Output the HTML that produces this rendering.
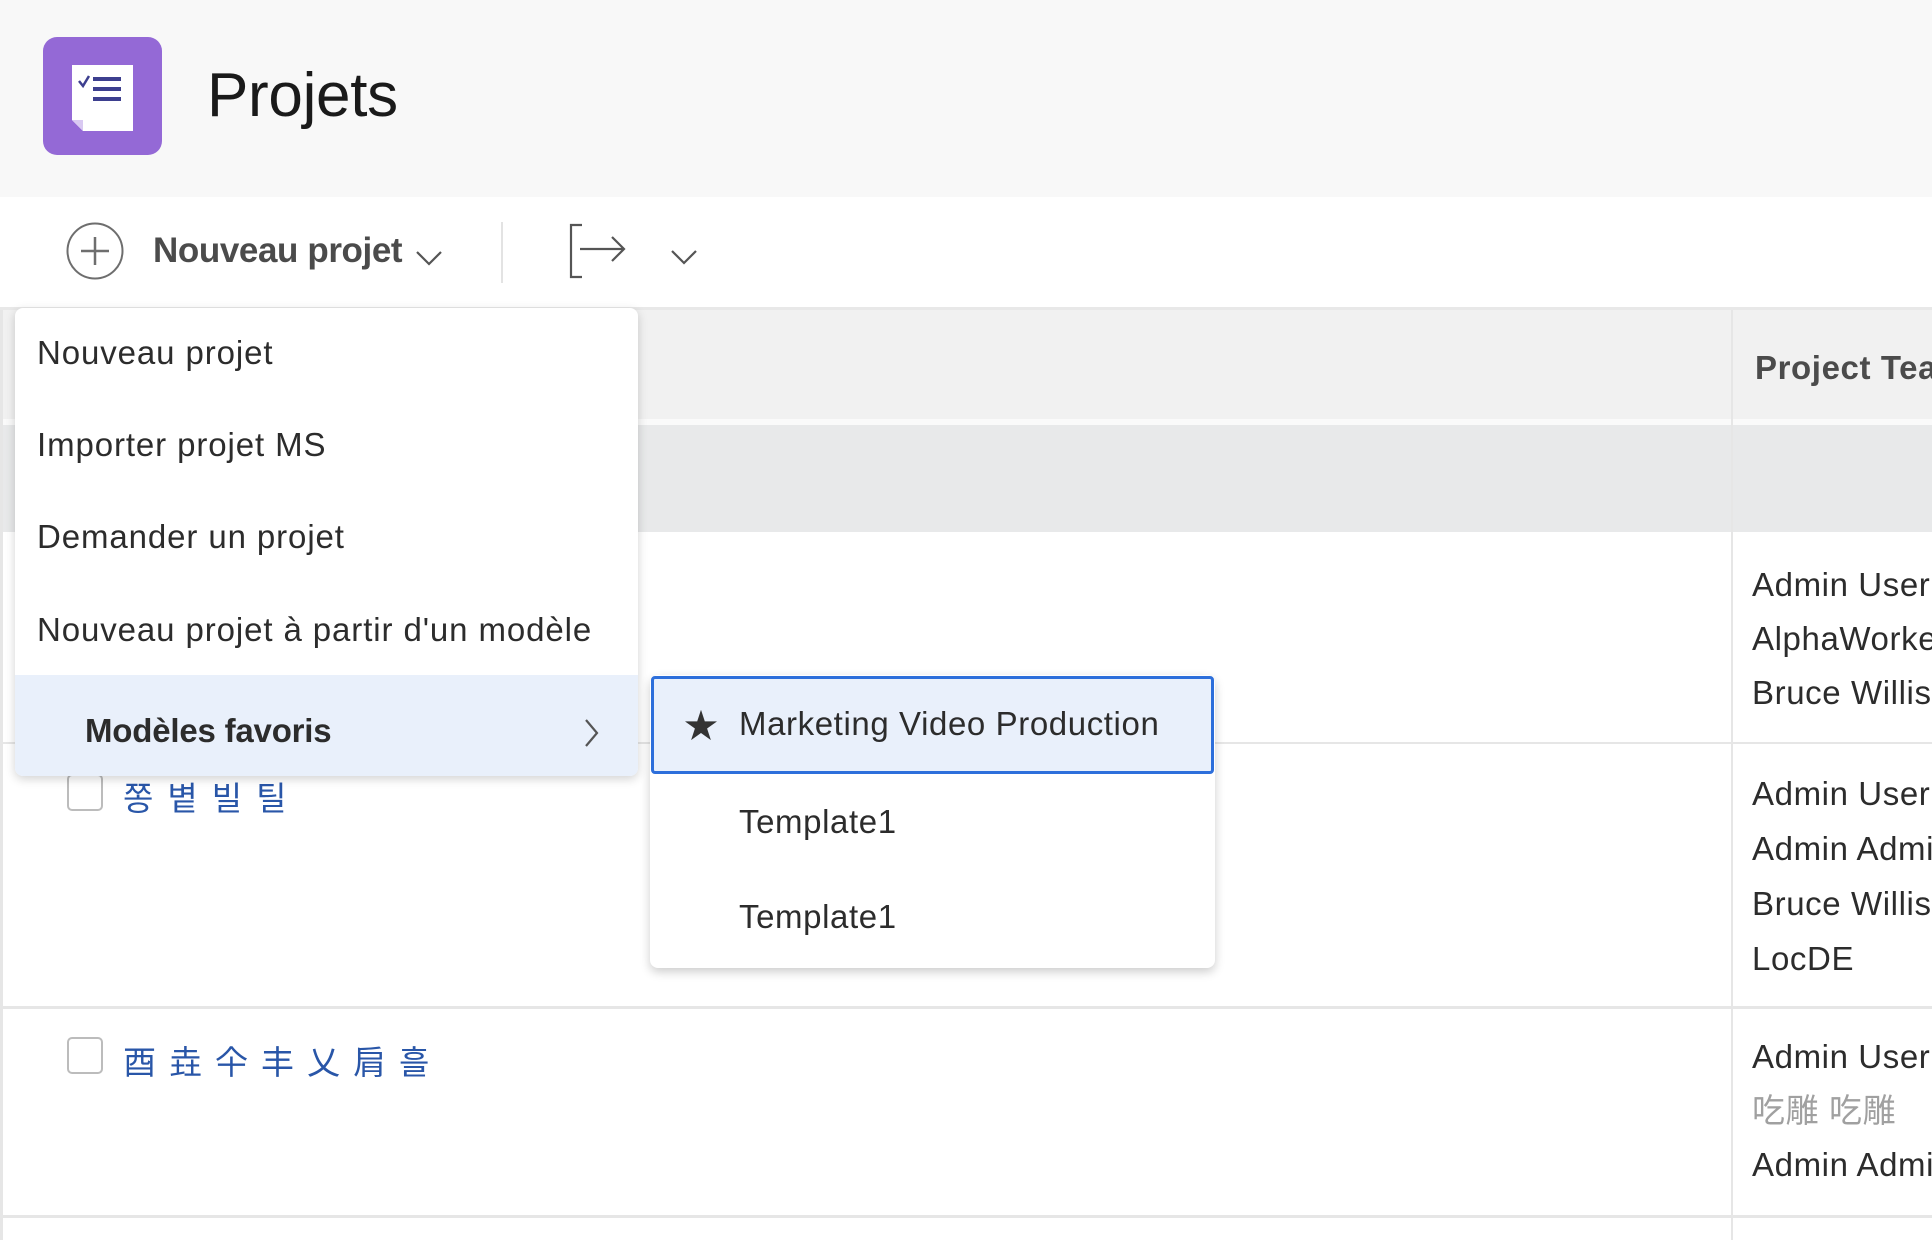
<!DOCTYPE html>
<html><head><meta charset="utf-8"><style>
*{margin:0;padding:0;box-sizing:border-box}
body{width:1932px;height:1236px;overflow:hidden;background:#fff;font-family:"Liberation Sans","Noto Sans CJK KR",sans-serif;color:#2c2c2c;position:relative}
.a{position:absolute;white-space:nowrap}
.t{font-size:33px;letter-spacing:0.6px}
</style></head><body>
<div class="a" style="left:0;top:0;width:1932px;height:197px;background:#f8f8f8"></div>
<div class="a" style="left:43px;top:37px;width:119px;height:118px;border-radius:14px;background:#9469d6"></div>
<svg class="a" style="left:43px;top:37px" width="119" height="118" viewBox="0 0 119 118">
<path d="M29 28H90V94H40L29 83Z" fill="#fff"/>
<path d="M29 83L40 83L40 94Z" fill="#d9c9f2"/>
<path d="M36 44l4 5l6 -10" stroke="#3d3f8f" stroke-width="2.5" fill="none"/>
<rect x="50" y="40" width="28" height="4" fill="#3d3f8f"/><rect x="50" y="50" width="28" height="4" fill="#3d3f8f"/><rect x="50" y="60" width="28" height="4" fill="#3d3f8f"/>
</svg>
<div class="a" style="left:207px;top:60px;font-size:62px;color:#1a1a1a;letter-spacing:-0.3px">Projets</div>
<svg class="a" style="left:65px;top:221px" width="60" height="60"><circle cx="30" cy="30" r="27.5" fill="none" stroke="#6e6e6e" stroke-width="2"/><path d="M30 16V44M16 30H44" stroke="#6e6e6e" stroke-width="2.5"/></svg>
<div class="a" style="left:153px;top:231px;font-size:35px;font-weight:bold;color:#4b4b4b;letter-spacing:-0.4px">Nouveau projet</div>
<svg class="a" style="left:414px;top:247px" width="30" height="20"><path d="M3 5l12 12l12-12" stroke="#555" stroke-width="2.2" fill="none"/></svg>
<div class="a" style="left:501px;top:222px;width:2px;height:61px;background:#e3e3e3"></div>
<svg class="a" style="left:568px;top:222px" width="62" height="58"><path d="M14 3H3V55H14" stroke="#555" stroke-width="2.2" fill="none"/><path d="M12 27H56M44 15l12 12l-12 12" stroke="#555" stroke-width="2.2" fill="none"/></svg>
<svg class="a" style="left:669px;top:247px" width="30" height="20"><path d="M3 4l12 12l12-12" stroke="#555" stroke-width="2.2" fill="none"/></svg>
<div class="a" style="left:0;top:307px;width:1932px;height:3px;background:#e8e8e8"></div>
<div class="a" style="left:0;top:310px;width:1932px;height:109px;background:#f1f1f1"></div>
<div class="a" style="left:0;top:419px;width:1932px;height:6px;background:#fafafa"></div>
<div class="a" style="left:0;top:425px;width:1932px;height:107px;background:#e8e9ea"></div>
<div class="a" style="left:1731px;top:310px;width:2px;height:930px;background:#e6e6e6"></div>
<div class="a" style="left:0;top:310px;width:3px;height:930px;background:#e6e6e6"></div>
<div class="a t" style="left:1755px;top:349px;font-weight:bold;color:#4b4b4b">Project Team</div>
<div class="a" style="left:0;top:742px;width:1932px;height:2px;background:#e6e6e6"></div>
<div class="a" style="left:0;top:1006px;width:1932px;height:3px;background:#e6e6e6"></div>
<div class="a" style="left:0;top:1215px;width:1932px;height:3px;background:#e6e6e6"></div>
<div class="a t" style="left:1752px;top:558px;line-height:54px">Admin User<br>AlphaWorker<br>Bruce Willis</div>
<div class="a t" style="left:1752px;top:766px;line-height:55px">Admin User<br>Admin Admin<br>Bruce Willis<br>LocDE</div>
<div class="a t" style="left:1752px;top:1030px;line-height:54px">Admin User<br><span style="color:#a0a0a0">吃雕 吃雕</span><br>Admin Admin</div>
<div class="a" style="left:67px;top:774px;width:36px;height:37px;border:2.5px solid #bcbcbc;border-radius:5px"></div>
<div class="a" style="left:123px;top:772px;font-size:33px;color:#2956a8;letter-spacing:14px">쫑볕빌틸</div>
<div class="a" style="left:67px;top:1037px;width:36px;height:37px;border:2.5px solid #bcbcbc;border-radius:5px"></div>
<div class="a" style="left:123px;top:1036px;font-size:33px;color:#2956a8;letter-spacing:13px">酉垚仐丰乂肩흘</div>
<div class="a" style="left:15px;top:308px;width:623px;height:468px;background:#fff;border-radius:8px;box-shadow:0 3px 10px rgba(0,0,0,.18);overflow:hidden">
<div class="a t" style="left:22px;top:26px;letter-spacing:0.9px">Nouveau projet</div>
<div class="a t" style="left:22px;top:118px;letter-spacing:0.9px">Importer projet MS</div>
<div class="a t" style="left:22px;top:210px;letter-spacing:0.9px">Demander un projet</div>
<div class="a t" style="left:22px;top:303px;letter-spacing:0.9px">Nouveau projet à partir d'un modèle</div>
<div class="a" style="left:0;top:367px;width:623px;height:101px;background:#e9f0fb"></div>
<div class="a t" style="left:70px;top:404px;font-weight:bold;letter-spacing:-0.2px">Modèles favoris</div>
<svg class="a" style="left:566px;top:408px" width="20" height="34"><path d="M5 4l11 13l-11 13" stroke="#555" stroke-width="2.2" fill="none"/></svg>
</div>
<div class="a" style="left:650px;top:675px;width:565px;height:293px;background:#fff;border-radius:8px;box-shadow:0 4px 10px rgba(0,0,0,.2)"></div>
<div class="a" style="left:651px;top:676px;width:563px;height:98px;background:#e9f0fb;border:3px solid #2d6fdb;border-radius:4px"></div>
<div class="a" style="left:684px;top:699px;font-size:34px;color:#333">★</div>
<div class="a t" style="left:739px;top:705px">Marketing Video Production</div>
<div class="a t" style="left:739px;top:803px">Template1</div>
<div class="a t" style="left:739px;top:898px">Template1</div>
</body></html>
